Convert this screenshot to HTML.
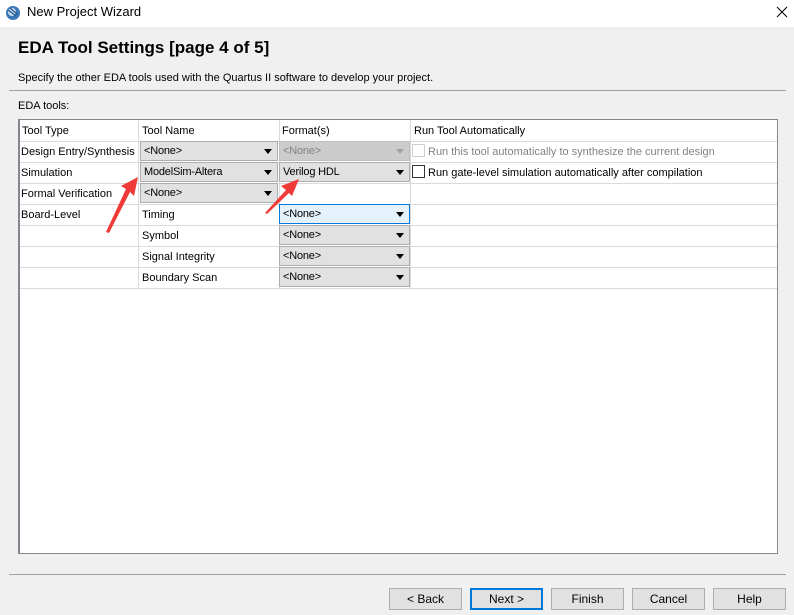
<!DOCTYPE html>
<html><head><meta charset="utf-8">
<style>
*{margin:0;padding:0;box-sizing:border-box}
body{width:794px;height:615px;background:#f0f0f0;font-family:"Liberation Sans",sans-serif;font-size:12px;color:#000;position:relative;overflow:hidden}
.a{position:absolute;white-space:nowrap}
.title{left:0;top:0;width:794px;height:27px;background:#fff}
.hl{position:absolute;height:1px;background:#dadada}
.vl{position:absolute;width:1px;background:#dadada}
.dd{position:absolute;height:20px;background:#e1e1e1;border:1px solid #adadad;padding-left:3px;line-height:19px;font-size:11px;letter-spacing:-0.2px}
.dd::after{content:"";position:absolute;right:5px;top:7px;border-left:4px solid transparent;border-right:4px solid transparent;border-top:5px solid #000}
.dis{background:#cccccc;border-color:#bfbfbf;color:#838383}
.dis::after{border-top-color:#a0a0a0}
.foc{background:#e5f1fb;border-color:#0078d7}
.btn{position:absolute;top:588px;width:73px;height:22px;background:#e1e1e1;border:1px solid #adadad;text-align:center;line-height:20px}
.cb{position:absolute;width:13px;height:13px;border:1px solid #333;background:#fff}
</style></head><body>
<div class="a title"></div>
<svg class="a" style="left:4px;top:4px" width="18" height="18" viewBox="0 0 18 18"><circle cx="9" cy="9" r="7" fill="#3a78b8"/><circle cx="8" cy="8" r="4" fill="#cfe0f0"/><path d="M4 6 L12 12 M6 4 L13 10" stroke="#1b4f8a" stroke-width="1.2"/></svg>
<div class="a" style="left:27px;top:4px;font-size:13px">New Project Wizard</div>
<svg class="a" style="left:776px;top:6px" width="12" height="12"><path d="M1 1L11 11M11 1L1 11" stroke="#000" stroke-width="1"/></svg>

<div class="a" style="left:18px;top:38px;font-size:17px;font-weight:bold">EDA Tool Settings [page 4 of 5]</div>
<div class="a" style="left:18px;top:72px;font-size:11px">Specify the other EDA tools used with the Quartus II software to develop your project.</div>
<div class="a" style="left:9px;top:90px;width:777px;height:1px;background:#a0a0a0"></div>
<div class="a" style="left:18px;top:100px;font-size:11px">EDA tools:</div>

<div class="a" style="left:18px;top:119px;width:760px;height:435px;background:#fff;border:1px solid #828790;border-left:2px solid #828790"></div>
<div class="hl" style="left:20px;top:141px;width:757px"></div>
<div class="hl" style="left:20px;top:162px;width:757px"></div>
<div class="hl" style="left:20px;top:183px;width:757px"></div>
<div class="hl" style="left:20px;top:204px;width:757px"></div>
<div class="hl" style="left:20px;top:225px;width:757px"></div>
<div class="hl" style="left:20px;top:246px;width:757px"></div>
<div class="hl" style="left:20px;top:267px;width:757px"></div>
<div class="hl" style="left:20px;top:288px;width:757px"></div>
<div class="vl" style="left:138px;top:120px;height:168px"></div>
<div class="vl" style="left:279px;top:120px;height:168px"></div>
<div class="vl" style="left:410px;top:120px;height:168px"></div>

<div class="a" style="left:22px;top:125px;font-size:11px">Tool Type</div>
<div class="a" style="left:142px;top:125px;font-size:11px">Tool Name</div>
<div class="a" style="left:282px;top:125px;font-size:11px">Format(s)</div>
<div class="a" style="left:414px;top:125px;font-size:11px">Run Tool Automatically</div>

<div class="a" style="left:21px;top:146px;font-size:11px">Design Entry/Synthesis</div>
<div class="a" style="left:21px;top:167px;font-size:11px">Simulation</div>
<div class="a" style="left:21px;top:188px;font-size:11px">Formal Verification</div>
<div class="a" style="left:21px;top:209px;font-size:11px">Board-Level</div>
<div class="a" style="left:142px;top:209px;font-size:11px">Timing</div>
<div class="a" style="left:142px;top:230px;font-size:11px">Symbol</div>
<div class="a" style="left:142px;top:251px;font-size:11px">Signal Integrity</div>
<div class="a" style="left:142px;top:272px;font-size:11px">Boundary Scan</div>

<div class="dd" style="left:140px;top:141px;width:138px">&lt;None&gt;</div>
<div class="dd dis" style="left:279px;top:141px;width:131px">&lt;None&gt;</div>
<div class="dd" style="left:140px;top:162px;width:138px">ModelSim-Altera</div>
<div class="dd" style="left:279px;top:162px;width:131px">Verilog HDL</div>
<div class="dd" style="left:140px;top:183px;width:138px">&lt;None&gt;</div>
<div class="dd foc" style="left:279px;top:204px;width:131px">&lt;None&gt;</div>
<div class="dd" style="left:279px;top:225px;width:131px">&lt;None&gt;</div>
<div class="dd" style="left:279px;top:246px;width:131px">&lt;None&gt;</div>
<div class="dd" style="left:279px;top:267px;width:131px">&lt;None&gt;</div>

<div class="cb" style="left:412px;top:144px;border-color:#cfcfcf"></div>
<div class="a" style="left:428px;top:146px;font-size:11px;color:#838383">Run this tool automatically to synthesize the current design</div>
<div class="cb" style="left:412px;top:165px"></div>
<div class="a" style="left:428px;top:167px;font-size:11px">Run gate-level simulation automatically after compilation</div>

<svg class="a" style="left:0;top:0" width="794" height="615">
<polygon points="106,232 126,189 121,186 138,177 134,196 130,192 109,233" fill="#f03a38"/>
<polygon points="265,213 286,190 281,186 299,179 292,196 289,193 267,214" fill="#f03a38"/>
</svg>

<div class="a" style="left:9px;top:574px;width:777px;height:1px;background:#a0a0a0"></div>
<div class="btn" style="left:389px">&lt; Back</div>
<div class="btn" style="left:470px;border:2px solid #0078d7;line-height:18px">Next &gt;</div>
<div class="btn" style="left:551px">Finish</div>
<div class="btn" style="left:632px">Cancel</div>
<div class="btn" style="left:713px">Help</div>
</body></html>
